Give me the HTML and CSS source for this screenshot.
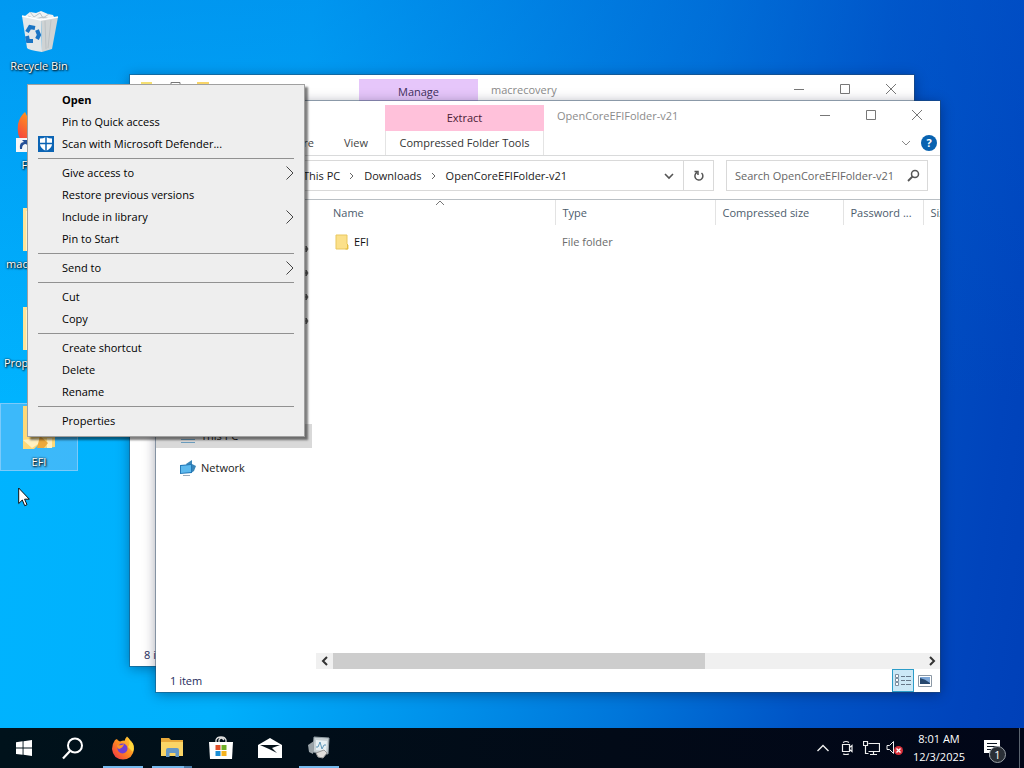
FILE: index.html
```html
<!DOCTYPE html>
<html lang="en">
<head>
<meta charset="utf-8">
<meta name="viewport" content="width=device-width, initial-scale=1">
<title>Desktop</title>
<link rel="stylesheet" href="styles.css">
</head>
<body>
<main class="desktop">
  <div class="shortcuts">
    <a class="shortcut" href="#recycle">
      <svg class="shortcut-icon" viewBox="0 0 48 48" aria-hidden="true">
        <path d="M10 8l5-4 6 1 5-2 7 3 5 1 2 4-27 3z" fill="#f0f3f4"/>
        <path d="M15 4l4 5 6-4 3 5 6-4M13 8l7 3 8-2 7 2" fill="none" stroke="#b9c3c9"/>
        <path d="M7 8l5 32q1 2 15 4l-1-33z" fill="#e3e7e9"/>
        <path d="M43 9l-6 32-10 3-1-33z" fill="#cfd3d4"/>
        <path d="M7 8l19 4 17-3" fill="none" stroke="#fff" stroke-width="1.5"/>
        <path d="M30 13l1 28M36 12l-3 28" stroke="#bcc2c5"/>
        <g fill="none" stroke="#1a74c4" stroke-width="4"><path d="M12 24l3-5 5 1"/><path d="M22 22l2 5-2 4"/><path d="M18 33h-5l-1-5"/></g>
      </svg>
      <span class="shortcut-label">Recycle Bin</span>
    </a>
    <a class="shortcut" href="#firefox">
      <svg class="shortcut-icon" viewBox="0 0 48 48" aria-hidden="true">
        <defs><linearGradient id="fox" x1="1" y1="0" x2="0" y2="1"><stop offset="0" stop-color="#ffdc3d"/><stop offset=".5" stop-color="#ff8a20"/><stop offset="1" stop-color="#f0284a"/></linearGradient></defs>
        <path d="M10 5q-5 4-7 12-3 22 21 24 20-1 22-21-1-13-12-19l-2 8Q20 2 12 9z" fill="url(#fox)"/>
        <circle cx="25" cy="25" r="10" fill="#7338cf"/>
        <path d="M1 31h14v14H1z" fill="#f5f6f7"/>
        <path d="M5 42q-1-7 4-7l-2-2h6v6l-2-2q-4 0-4 5z" fill="#254f96"/>
      </svg>
      <span class="shortcut-label">Firefox</span>
    </a>
    <a class="shortcut" href="#macrecovery">
      <svg class="shortcut-icon" viewBox="0 0 48 48" aria-hidden="true"><path d="M8 2h18l2 3h12v40H8z" fill="#ffe49a"/><path d="M11 5h8v40h-8z" fill="#fff3ca"/></svg>
      <span class="shortcut-label">macrecovery</span>
    </a>
    <a class="shortcut" href="#propertree">
      <svg class="shortcut-icon" viewBox="0 0 48 48" aria-hidden="true"><path d="M8 2h18l2 3h12v40H8z" fill="#ffe49a"/><path d="M11 5h8v40h-8z" fill="#fff3ca"/></svg>
      <span class="shortcut-label">ProperTree-...</span>
    </a>
    <a class="shortcut selected" href="#efi">
      <svg class="shortcut-icon" viewBox="0 0 48 48" aria-hidden="true"><path d="M8 2h18l2 3h12v38l-11 1-6-3-4 4H8z" fill="#ffd978"/><path d="M8 36l9 8 9-6-2-4zM32 34h5v10h-5z" fill="#fff0c0"/><path d="M25 32l8 7-4 5h-7z" fill="#eda93c"/></svg>
      <span class="shortcut-label">EFI</span>
    </a>
  </div>

  <section class="window window-back" aria-label="macrecovery">
    <header class="titlebar">
      <div class="quick-tools">
        <svg width="14" height="14" viewBox="0 0 14 14" aria-hidden="true"><path d="M1 2h11v12H1z" fill="#f5df72"/></svg>
        <svg width="14" height="14" viewBox="0 0 14 14" aria-hidden="true"><path d="M3 2.500h9v11H3z" fill="#fff" stroke="#777"/></svg>
        <svg width="14" height="14" viewBox="0 0 14 14" aria-hidden="true"><path d="M1 2h12v11H1z" fill="#f8d467"/></svg>
      </div>
      <div class="context-title manage">Manage</div>
      <h2 class="window-title">macrecovery</h2>
      <div class="window-buttons">
        <button type="button" aria-label="Minimize"><svg viewBox="0 0 12 12"><path d="M1 6.500h10"/></svg></button>
        <button type="button" aria-label="Maximize"><svg viewBox="0 0 12 12"><path d="M1.500 1.500h9v9h-9z"/></svg></button>
        <button type="button" aria-label="Close"><svg viewBox="0 0 12 12"><path d="M1 1l10 10M11 1L1 11"/></svg></button>
      </div>
    </header>
    <div class="window-body"></div>
    <footer class="status"><span>8 items</span></footer>
  </section>

  <section class="window window-front" aria-label="OpenCoreEFIFolder-v21">
    <header class="ribbon">
      <div class="tabs">
        <button type="button">Share</button>
        <button type="button">View</button>
      </div>
      <div class="context-title extract">Extract</div>
      <button class="context-tab" type="button">Compressed Folder Tools</button>
      <div class="caption">
        <h2 class="window-title">OpenCoreEFIFolder-v21</h2>
        <div class="window-buttons">
          <button type="button" aria-label="Minimize"><svg viewBox="0 0 12 12"><path d="M1 6.500h10"/></svg></button>
          <button type="button" aria-label="Maximize"><svg viewBox="0 0 12 12"><path d="M1.500 1.500h9v9h-9z"/></svg></button>
          <button type="button" aria-label="Close"><svg viewBox="0 0 12 12"><path d="M1 1l10 10M11 1L1 11"/></svg></button>
        </div>
      </div>
      <div class="ribbon-tools">
        <button type="button" aria-label="Expand the ribbon"><svg width="10" height="6" viewBox="0 0 10 6"><path d="M1 1l4 4 4-4" fill="none" stroke="#888"/></svg></button>
        <button type="button" class="help" aria-label="Help">?</button>
      </div>
    </header>

    <div class="address-row">
      <nav class="address" aria-label="Path">
        <a href="#pc">This PC</a>
        <svg class="crumb" viewBox="0 0 24 12" aria-hidden="true"><path d="M10 3l3 3-3 3"/></svg>
        <a href="#downloads">Downloads</a>
        <svg class="crumb" viewBox="0 0 24 12" aria-hidden="true"><path d="M10 3l3 3-3 3"/></svg>
        <a href="#folder">OpenCoreEFIFolder-v21</a>
        <button class="history" type="button" aria-label="Previous locations"><svg width="10" height="8" viewBox="0 0 10 8"><path d="M1 2l4 4 4-4" fill="none" stroke="#555" stroke-width="1.600"/></svg></button>
        <button class="refresh" type="button" aria-label="Refresh"><svg width="12" height="12" viewBox="0 0 12 12"><path d="M8.500 3a4 4 0 1 1-4.500-.5M1.500 1.500h3.500V5" fill="none" stroke="#555" stroke-width="1.500"/></svg></button>
      </nav>
      <label class="search">
        <input type="text" aria-label="Search" placeholder="Search OpenCoreEFIFolder-v21">
        <svg width="13" height="13" viewBox="0 0 13 13" aria-hidden="true"><circle cx="8" cy="5" r="3.500" fill="none" stroke="#555" stroke-width="1.500"/><path d="M5.500 7.500L1 12" stroke="#555" stroke-width="1.800"/></svg>
      </label>
    </div>

    <div class="explorer">
      <nav class="tree" aria-label="Folders">
        <div class="pinned">
          <svg viewBox="0 0 6 8" aria-hidden="true"><path d="M0 4h3M3 1v6l2-3z"/></svg>
          <svg viewBox="0 0 6 8" aria-hidden="true"><path d="M0 4h3M3 1v6l2-3z"/></svg>
          <svg viewBox="0 0 6 8" aria-hidden="true"><path d="M0 4h3M3 1v6l2-3z"/></svg>
          <svg viewBox="0 0 6 8" aria-hidden="true"><path d="M0 4h3M3 1v6l2-3z"/></svg>
        </div>
        <a class="tree-item current" href="#pc">
          <svg width="16" height="16" viewBox="0 0 16 16" aria-hidden="true"><path d="M1 1h14v8H1z" fill="#57b8e8"/><path d="M1 11.500h14M1 14.500h14" stroke="#6b9cbd"/></svg>This PC</a>
        <a class="tree-item" href="#network">
          <svg width="16" height="16" viewBox="0 0 16 16" aria-hidden="true"><path d="M6 4l6-4v4l4 2-2 5-3 2z" fill="#3a86b8"/><path d="M0 5l12-1v9l-12 1z" fill="#2479b8"/><path d="M1 6l10-1v7l-10 1z" fill="#5cb9ee"/><path d="M3 15.500h7" stroke="#9ab"/></svg>Network</a>
      </nav>
      <div class="files">
        <div class="file-list">
          <table>
            <colgroup><col class="col-name"><col class="col-type"><col class="col-packed"><col class="col-password"><col class="col-size"></colgroup>
            <thead><tr>
              <th class="sorted">Name<svg class="sort" viewBox="0 0 10 6" aria-hidden="true"><path d="M1 5l4-4 4 4"/></svg></th>
              <th>Type</th><th>Compressed size</th><th>Password ...</th><th>Size</th>
            </tr></thead>
            <tbody><tr>
              <td class="name"><svg width="14" height="16" viewBox="0 0 14 16" aria-hidden="true"><path d="M1 1h11v9l1 1v4H1z" fill="#fbe08a" stroke="#e9c75f"/><path d="M12.500 10v5h-2" fill="none" stroke="#e4bd3f"/></svg><span>EFI</span></td>
              <td>File folder</td><td></td><td></td><td></td>
            </tr></tbody>
          </table>
        </div>
        <div class="scrollbar">
          <button type="button" aria-label="Scroll left"><svg viewBox="0 0 8 10"><path d="M6 1L2 5l4 4"/></svg></button>
          <div class="track"><div class="thumb"></div></div>
          <button type="button" aria-label="Scroll right"><svg viewBox="0 0 8 10"><path d="M2 1l4 4-4 4"/></svg></button>
        </div>
      </div>
    </div>

    <footer class="status">
      <span>1 item</span>
      <div class="views">
        <button type="button" class="active" aria-label="Details"><svg width="16" height="13" viewBox="0 0 16 13"><path d="M.5.5h3v3h-3zM.5 4.500h3v3h-3zM.5 8.500h3v3h-3z" fill="#fff" stroke="#7d8fa0"/><path d="M6 2.500h4m1 0h5M6 6.500h4m1 0h5M6 10.500h4m1 0h5" stroke="#678"/></svg></button>
        <button type="button" aria-label="Large icons"><svg width="14" height="12" viewBox="0 0 14 12"><path d="M.5.5h13v11H.5z" fill="#fff" stroke="#8b98a5"/><path d="M2 2h10v7H2z" fill="#7da7d8"/><path d="M2 3q5 1 10 5v1H2z" fill="#26476e"/></svg></button>
      </div>
    </footer>
  </section>

  <div class="menu" role="menu">
    <button type="button" role="menuitem" class="default">Open</button>
    <button type="button" role="menuitem">Pin to Quick access</button>
    <button type="button" role="menuitem" class="with-icon"><svg class="shield" viewBox="0 0 16 16" aria-hidden="true"><path d="M0 0h16v16H0z" fill="#0b64b4"/><path d="M8 1q3 1.500 6 1.500V8q0 4-6 7-6-3-6-7V2.500Q5 2.500 8 1z" fill="#fff"/><path d="M8 1v14M2 7.500h12" stroke="#0b64b4" stroke-width="1.500"/></svg>Scan with Microsoft Defender...</button>
    <hr>
    <button type="button" role="menuitem">Give access to<svg class="sub" viewBox="0 0 8 14"><path d="M.5.500L7 7 .5 13.500"/></svg></button>
    <button type="button" role="menuitem">Restore previous versions</button>
    <button type="button" role="menuitem">Include in library<svg class="sub" viewBox="0 0 8 14"><path d="M.5.500L7 7 .5 13.500"/></svg></button>
    <button type="button" role="menuitem">Pin to Start</button>
    <hr>
    <button type="button" role="menuitem">Send to<svg class="sub" viewBox="0 0 8 14"><path d="M.5.500L7 7 .5 13.500"/></svg></button>
    <hr>
    <button type="button" role="menuitem">Cut</button>
    <button type="button" role="menuitem">Copy</button>
    <hr>
    <button type="button" role="menuitem">Create shortcut</button>
    <button type="button" role="menuitem">Delete</button>
    <button type="button" role="menuitem">Rename</button>
    <hr>
    <button type="button" role="menuitem">Properties</button>
  </div>

  <svg class="cursor" viewBox="0 0 12 20" aria-hidden="true"><path d="M.7 1v15.500l3.600-3.500 2.400 5.700 2.300-1-2.400-5.500h4.700z" fill="#fff" stroke="#111"/></svg>
</main>

<footer class="taskbar">
  <div class="apps">
    <button type="button" aria-label="Start"><svg width="16" height="16" viewBox="0 0 16 16"><path d="M0 2.200l6.600-.9v6.300H0zM7.500 1.200L16 0v7.600H7.500zM0 8.500h6.600v6.300L0 13.900zM7.500 8.500H16V16l-8.500-1.200z" fill="#fff"/></svg></button>
    <button type="button" aria-label="Search"><svg width="24" height="24" viewBox="0 0 24 24"><circle cx="14" cy="9.500" r="7" fill="none" stroke="#fff" stroke-width="2"/><path d="M9 15l-7 7.500" stroke="#fff" stroke-width="2.200"/></svg></button>
    <button type="button" class="running first" aria-label="Firefox"><svg width="24" height="24" viewBox="0 0 24 24"><path d="M4 4q-3 4-3 9 1 10 11 10.500 10-.5 11-10.500 0-6-4-9-1-2-3-3.500-2 2-2 4-3 0-5 1Q6 4 6 3z" fill="url(#fox)"/><path d="M17 2q3 5 0 9l5 5q2-7-2-10z" fill="#ffd83c"/><circle cx="11.500" cy="12.500" r="5" fill="#6f3fd5"/><path d="M6 9q4 1 7-1-1 4-5 5-2-1-2-4z" fill="#ff9524"/></svg></button>
    <button type="button" class="running grouped" aria-label="File Explorer"><svg width="24" height="22" viewBox="0 0 24 22"><path d="M1 1h8l2 2h12v16H1z" fill="#e8a93a"/><path d="M1 5h22v14H1z" fill="#fbd566"/><path d="M6 20v-7q0-2 2-2h9q2 0 2 2v7h-3.500v-4h-6v4z" fill="#6597c6"/></svg></button>
    <button type="button" aria-label="Microsoft Store"><svg width="24" height="24" viewBox="0 0 24 24"><path d="M7 7V4q1-3 5-3t5 3v3M10 7V4q2-4 5 0" fill="none" stroke="#ddd" stroke-width="1.300"/><path d="M0 6h24l-1 17H1z" fill="#fff"/><path d="M6.500 9h5v5h-5z" fill="#e0502a"/><path d="M12.500 9h5v5h-5z" fill="#6fae28"/><path d="M6.500 15h5v5h-5z" fill="#1b8fd6"/><path d="M12.500 15h5v5h-5z" fill="#f5b31f"/></svg></button>
    <button type="button" aria-label="Mail"><svg width="26" height="22" viewBox="0 0 26 22"><path d="M1 8l12-7 12 7v13H1z" fill="#fff"/><path d="M3 8h20L15 11l5 5-8-4z" fill="#06131c"/></svg></button>
    <button type="button" class="running" aria-label="Task Manager"><svg width="24" height="24" viewBox="0 0 24 24"><path d="M7 1l15 1-1 16-15-2z" fill="#c9d2d6" stroke="#919ca2"/><path d="M9 4l11 1-1 10-10-1z" fill="#e7f0f3"/><path d="M9 11h2l2-5 2 7 2-4h2" fill="none" stroke="#5f97b8"/><path d="M1 9l6-4-1 13-4-2z" fill="#9aa3a8"/><path d="M9 17l8-3 3 3-4 5-5-1z" fill="#e0dedb" stroke="#999"/></svg></button>
  </div>
  <div class="tray">
    <button type="button" aria-label="Show hidden icons"><svg width="14" height="10" viewBox="0 0 14 10"><path d="M1.500 8L7 2.500 12.500 8" fill="none" stroke="#eee" stroke-width="1.400"/></svg></button>
    <button type="button" aria-label="Meet Now"><svg width="14" height="16" viewBox="0 0 14 16"><path d="M2.500 4.500h7v7h-7zM9.500 7.500l2.500-2v6l-2.500-2M3 2.500q3-2 6 0M3 14q3 1 6 0" fill="none" stroke="#eee" stroke-width="1.200"/></svg></button>
    <button type="button" aria-label="Network"><svg width="17" height="15" viewBox="0 0 17 15"><path d="M5.500 2.500h11v8h-11M10.500 10.500v3M7 13.500h7M.5.500h4v4h-4zM2.500 4.500v8h3" fill="none" stroke="#eee" stroke-width="1.200"/></svg></button>
    <button type="button" aria-label="Volume muted"><svg width="18" height="16" viewBox="0 0 18 16"><path d="M1 5.500h2.500l4-4v12l-4-4H1z" fill="none" stroke="#eee"/><circle cx="12.500" cy="10.500" r="4.500" fill="#d9303a"/><path d="M10.500 8.500l4 4m0-4l-4 4" stroke="#fff" stroke-width="1.300"/></svg></button>
    <button type="button" class="clock"><span>8:01 AM</span><span>12/3/2025</span></button>
    <button type="button" class="notices" aria-label="Notifications"><svg width="16" height="17" viewBox="0 0 16 17"><path d="M0 0h16v13H9l-4 4v-4H0z" fill="#fff"/><path d="M3 3.500h10M3 6.500h10M3 9.500h7" stroke="#0a1420"/></svg><span class="badge">1</span></button>
    <button type="button" class="show-desktop" aria-label="Show desktop"></button>
  </div>
</footer>
</body>
</html>
```
FILE: styles.css
```css
* { box-sizing: border-box; }

body {
  margin: 0;
  min-height: 100vh;
  display: flex;
  flex-direction: column;
  overflow: hidden;
  font: 11px/16px "Open Sans", "Noto Sans", sans-serif;
  color: #1a1a1a;
}

button {
  margin: 0;
  padding: 0;
  border: 0;
  background: none;
  font: inherit;
  color: inherit;
}

a { color: inherit; text-decoration: none; }
svg { display: block; flex: none; }
h2 { margin: 0; font-size: inherit; font-weight: 400; }

.desktop {
  flex: 1;
  position: relative;
  background:
    linear-gradient(to bottom, rgba(0, 90, 210, 0.3), rgba(0, 80, 200, 0) 55%),
    linear-gradient(98deg, #00b4ff 0%, #00b0fc 28%, #0094ec 46%, #0076da 64%, #0054c6 80%, #0044bc 94%, #0040b8 100%);
}

/* Desktop shortcuts */
.shortcuts {
  display: flex;
  flex-direction: column;
  align-items: flex-start;
  gap: 31px;
  padding-top: 7px;
}

.shortcut {
  display: flex;
  flex-direction: column;
  align-items: center;
  width: 78px;
  height: 68px;
  border: 1px solid transparent;
  color: #fff;
}

.shortcut.selected { background: rgba(110, 190, 245, 0.55); border-color: rgba(150, 210, 250, 0.7); }
.shortcut-icon { width: 48px; height: 48px; }
.shortcut-label { padding-top: 2px; text-shadow: 1px 1px 2px #000, 0 0 2px #000; }

/* Windows */
.window {
  position: absolute;
  display: flex;
  flex-direction: column;
  background: #fff;
  box-shadow: 0 0 0 1px rgba(40, 70, 100, 0.45), 0 2px 12px rgba(0, 10, 40, 0.4);
}

.window-back { top: 75px; right: 110px; bottom: 62px; left: 130px; }
.window-front { top: 101px; right: 84px; bottom: 36px; left: 156px; }
.window-body { flex: 1; }
.window-title { color: #8b8b8b; padding-left: 13px; }

.titlebar { display: flex; height: 30px; padding-top: 4px; }
.titlebar .window-title { padding-top: 3px; }
.quick-tools { display: flex; gap: 14px; width: 229px; padding: 1px 0 0 10px; }

.context-title { display: flex; align-items: center; justify-content: center; }
.manage { width: 119px; background: #e6c6fa; color: #40305a; }
.extract { grid-area: 1 / 2; margin-top: 4px; background: #ffc1da; color: #4a2035; }

.window-buttons { display: flex; margin: 0 0 0 auto; }
.window-buttons button { display: grid; place-items: center; width: 46px; height: 20px; }
.window-buttons svg { width: 12px; height: 12px; fill: none; stroke: #777; }

.ribbon {
  display: grid;
  grid-template-columns: 229px 159px 1fr;
  grid-template-rows: 30px 24px;
  border-bottom: 1px solid #d9dadb;
}
.tabs { grid-area: 2 / 1; display: flex; justify-content: flex-end; gap: 30px; padding-right: 17px; color: #444; }
.context-tab { grid-area: 2 / 2; border: solid #e4e4e4; border-width: 0 1px; color: #333; }
.caption { grid-area: 1 / 3; display: flex; padding-top: 4px; }
.caption .window-title { padding-top: 3px; }
.ribbon-tools { grid-area: 2 / 3; display: flex; align-items: center; justify-content: flex-end; gap: 10px; padding-right: 3px; }
.help { width: 16px; height: 16px; border-radius: 8px; background: #0862b0; color: #fff; font-weight: 700; line-height: 16px; }

/* Address bar */
.address-row { display: flex; gap: 12px; padding: 4px 12px 8px 106px; border-bottom: 1px solid #b9bfc4; }
.address { flex: 1; display: flex; align-items: center; height: 31px; padding-left: 40px; border: 1px solid #d9d9d9; }
.crumb { width: 24px; height: 12px; fill: none; stroke: #666; }
.history { display: grid; place-items: center; width: 29px; height: 100%; margin-left: auto; }
.refresh { display: grid; place-items: center; width: 30px; height: 100%; border-left: 1px solid #d9d9d9; }
.search { display: flex; align-items: center; width: 202px; height: 31px; padding: 0 7px 0 8px; border: 1px solid #d9d9d9; }
.search input { flex: 1; min-width: 0; padding: 0; border: 0; outline: 0; font: inherit; background: none; }
.search input::placeholder { color: #666; opacity: 1; }

/* Folder tree and file list */
.explorer { flex: 1; display: flex; min-height: 0; }
.tree { width: 160px; flex: none; padding: 37px 4px 0 0; }
.pinned { display: flex; flex-direction: column; align-items: flex-end; gap: 16px; height: 187px; padding: 8px 3px 0 0; }
.pinned svg { width: 6px; height: 8px; fill: #666; stroke: #666; }
.tree-item { display: flex; align-items: center; gap: 5px; height: 24px; margin-bottom: 8px; padding-left: 24px; }
.tree-item.current { background: #d9d9d9; }

.files { flex: 1; display: flex; flex-direction: column; min-width: 0; }
.file-list { flex: 1; overflow: hidden; }
table { width: 728px; table-layout: fixed; border-collapse: collapse; }
.col-name { width: 239px; }
.col-type { width: 160px; }
.col-packed { width: 128px; }
.col-password { width: 80px; }
th, td { padding: 0 7px; text-align: left; font-weight: 400; white-space: nowrap; }
th { height: 25px; border-right: 1px solid #e3e3e3; color: #4c5c6c; }
td { height: 34px; color: #6b6b6b; }
.sorted { position: relative; padding-left: 17px; }
.sort { position: absolute; top: 0; left: 50%; width: 10px; height: 6px; fill: none; stroke: #777; }
.name { display: flex; align-items: center; gap: 5px; padding-left: 19px; color: #111; }

.scrollbar { display: flex; height: 16px; background: #f0f0f0; }
.scrollbar button { display: grid; place-items: center; width: 17px; }
.scrollbar svg { width: 8px; height: 10px; fill: none; stroke: #333; stroke-width: 2; }
.track { flex: 1; display: flex; }
.thumb { width: 63%; background: #cdcdcd; }

.status { display: flex; align-items: center; height: 23px; padding-left: 14px; color: #1e2b5c; }
.views { display: flex; margin-left: auto; padding-right: 4px; height: 100%; }
.views button { display: grid; place-items: center; width: 22px; }
.views .active { background: #cce8f6; border: 1px solid #2c9dc9; }

/* Context menu */
.menu {
  position: absolute;
  top: 84px;
  left: 27px;
  width: 278px;
  padding: 4px 2px;
  border: 1px solid #a0a0a0;
  background: #eee;
  box-shadow: 3px 3px 2px rgba(0, 0, 0, 0.5);
  color: #000;
}

.menu button { display: flex; align-items: center; width: 100%; height: 22px; padding: 0 8px 0 32px; }
.menu .default { font-weight: 700; }
.menu .with-icon { gap: 8px; padding-left: 8px; }
.menu hr { height: 1px; margin: 3px 8px; border: 0; background: #919191; }
.shield { width: 16px; height: 16px; }
.sub { width: 8px; height: 14px; margin-left: auto; fill: none; stroke: #444; }

.cursor { position: absolute; top: 487px; left: 18px; width: 12px; height: 20px; }

/* Taskbar */
.taskbar { display: flex; height: 40px; background: linear-gradient(to right, #00121b, #020a17 60%, #010618); color: #fff; }
.apps { display: flex; gap: 1px; }
.apps button { position: relative; display: grid; place-items: center; width: 48px; height: 40px; }
.apps .first { margin-left: 1px; }
.apps .running::after { content: ""; position: absolute; bottom: 0; left: 4px; width: 40px; height: 2px; background: #76b9ed; }
.apps .grouped::after { background: linear-gradient(to right, #76b9ed 32px, #4a7ba6 32px); }

.tray { display: flex; margin-left: auto; }
.tray button { display: grid; place-items: center; width: 24px; }
.tray .clock { display: flex; flex-direction: column; align-items: center; justify-content: center; width: 64px; line-height: 18px; }
.tray .notices { position: relative; width: 48px; padding-right: 7px; }
.badge { position: absolute; top: 18px; left: 18px; width: 17px; height: 17px; border: 1px solid #9aa0a6; border-radius: 9px; background: #2a2f36; line-height: 15px; }
.tray .show-desktop { width: 5px; border-left: 1px solid #5b6470; }
```
